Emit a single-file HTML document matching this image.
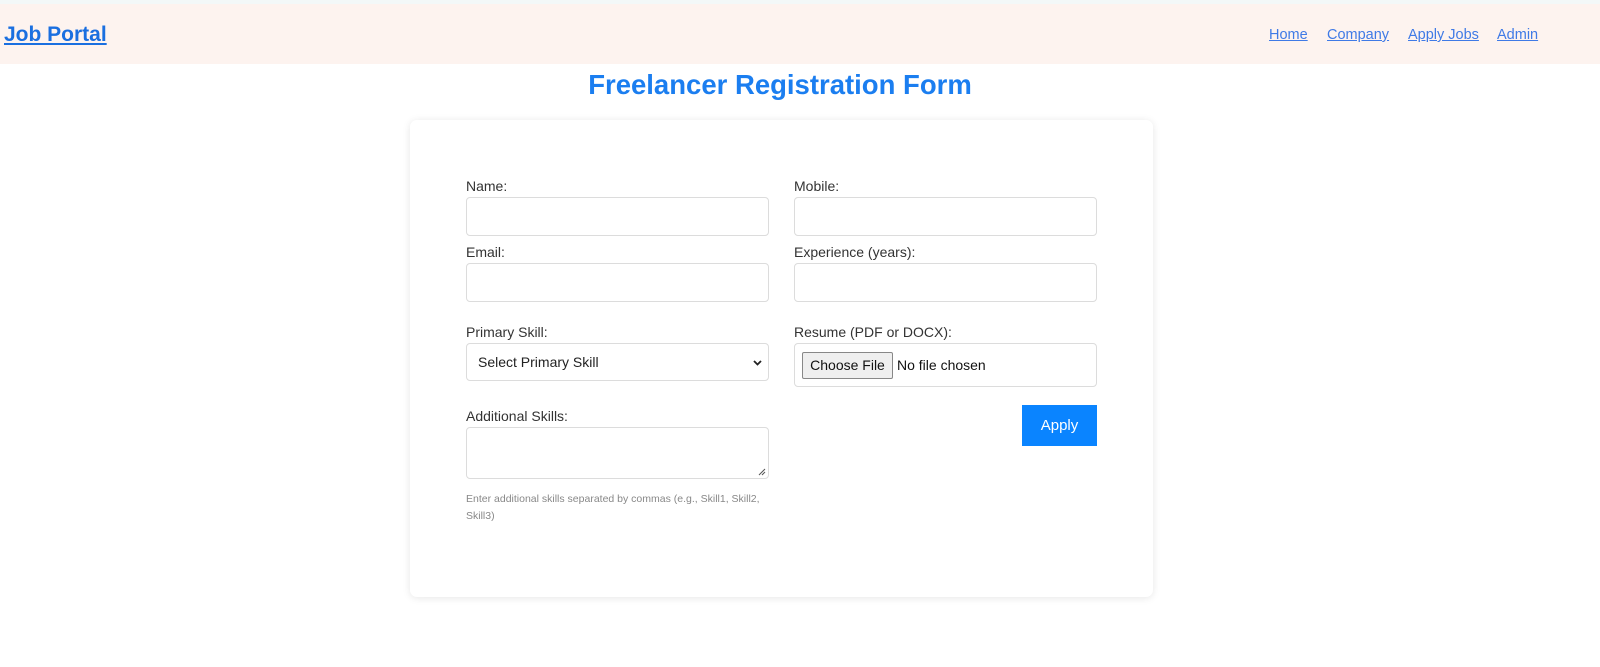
<!DOCTYPE html>
<html><head><style>
*{box-sizing:border-box;margin:0;padding:0}
body{width:1600px;height:667px;background:#fff;font-family:"Liberation Sans",sans-serif;position:relative;overflow:hidden;color:#333}
.top{position:absolute;left:0;top:0;width:1600px;height:4px;background:#f3f8f8}
.hdr{position:absolute;left:0;top:4px;width:1600px;height:60px;background:#fdf3ef}
.logo{position:absolute;left:4px;top:23px;font-size:21px;font-weight:bold;color:#1a6fe0;text-decoration:underline}
.nav a{position:absolute;top:27px;font-size:14.5px;color:#3f7ae6;text-decoration:underline}
h1{position:absolute;left:0;width:1560px;text-align:center;top:69px;font-size:27.5px;font-weight:bold;color:#1b7ef0}
.card{position:absolute;left:410px;top:120px;width:743px;height:477px;background:#fff;border-radius:7px;box-shadow:0 1px 8px rgba(0,0,0,.1)}
.l{position:absolute;font-size:14px;color:#333}
.i{position:absolute;width:303px;height:39px;border:1px solid #dcdcdc;border-radius:4px;background:#fff}
.btn{position:absolute;left:1022px;top:405px;width:75px;height:41px;background:#0a84ff;color:#fff;font-size:15px;text-align:center;line-height:41px}
.h{position:absolute;left:466px;top:491px;width:310px;font-size:10.5px;line-height:17px;color:#888}
</style></head><body>
<div class="top"></div>
<div class="hdr"></div>
<div class="logo">Job Portal</div>
<div class="nav"><a style="left:1269px">Home</a><a style="left:1327px">Company</a><a style="left:1408px">Apply Jobs</a><a style="left:1497px">Admin</a></div>
<h1>Freelancer Registration Form</h1>
<div class="card"></div>
<div class="l" style="left:466px;top:178px">Name:</div>
<div class="i" style="left:466px;top:197px"></div>
<div class="l" style="left:794px;top:178px">Mobile:</div>
<div class="i" style="left:794px;top:197px"></div>
<div class="l" style="left:466px;top:244px">Email:</div>
<div class="i" style="left:466px;top:263px"></div>
<div class="l" style="left:794px;top:244px">Experience (years):</div>
<div class="i" style="left:794px;top:263px"></div>
<div class="l" style="left:466px;top:324px">Primary Skill:</div>
<div class="i" style="left:466px;top:343px;height:38px"><span style="position:absolute;left:11px;top:10px;font-size:14px;color:#222">Select Primary Skill</span><svg style="position:absolute;left:286px;top:16px" width="9" height="6" viewBox="0 0 9 6"><path d="M1 1l3.5 3.5L8 1" stroke="#222" stroke-width="1.8" fill="none"/></svg></div>
<div class="l" style="left:794px;top:324px">Resume (PDF or DOCX):</div>
<div class="i" style="left:794px;top:343px;height:44px"><span style="position:absolute;left:7px;top:8px;width:91px;height:27px;border:1px solid #888;border-radius:2px;background:#efefef;font-size:14px;line-height:25px;text-align:center;color:#111;white-space:nowrap">Choose File</span><span style="position:absolute;left:102px;top:13px;font-size:14px;color:#111;white-space:nowrap">No file chosen</span></div>
<div class="btn">Apply</div>
<div class="l" style="left:466px;top:408px">Additional Skills:</div>
<div class="i" style="left:466px;top:427px;height:52px"><svg style="position:absolute;right:2px;bottom:2px" width="8" height="8"><path d="M7 1L1 7M7 4L4 7" stroke="#555" stroke-width="1"/></svg></div>
<div class="h">Enter additional skills separated by commas (e.g., Skill1, Skill2, Skill3)</div>
</body></html>
